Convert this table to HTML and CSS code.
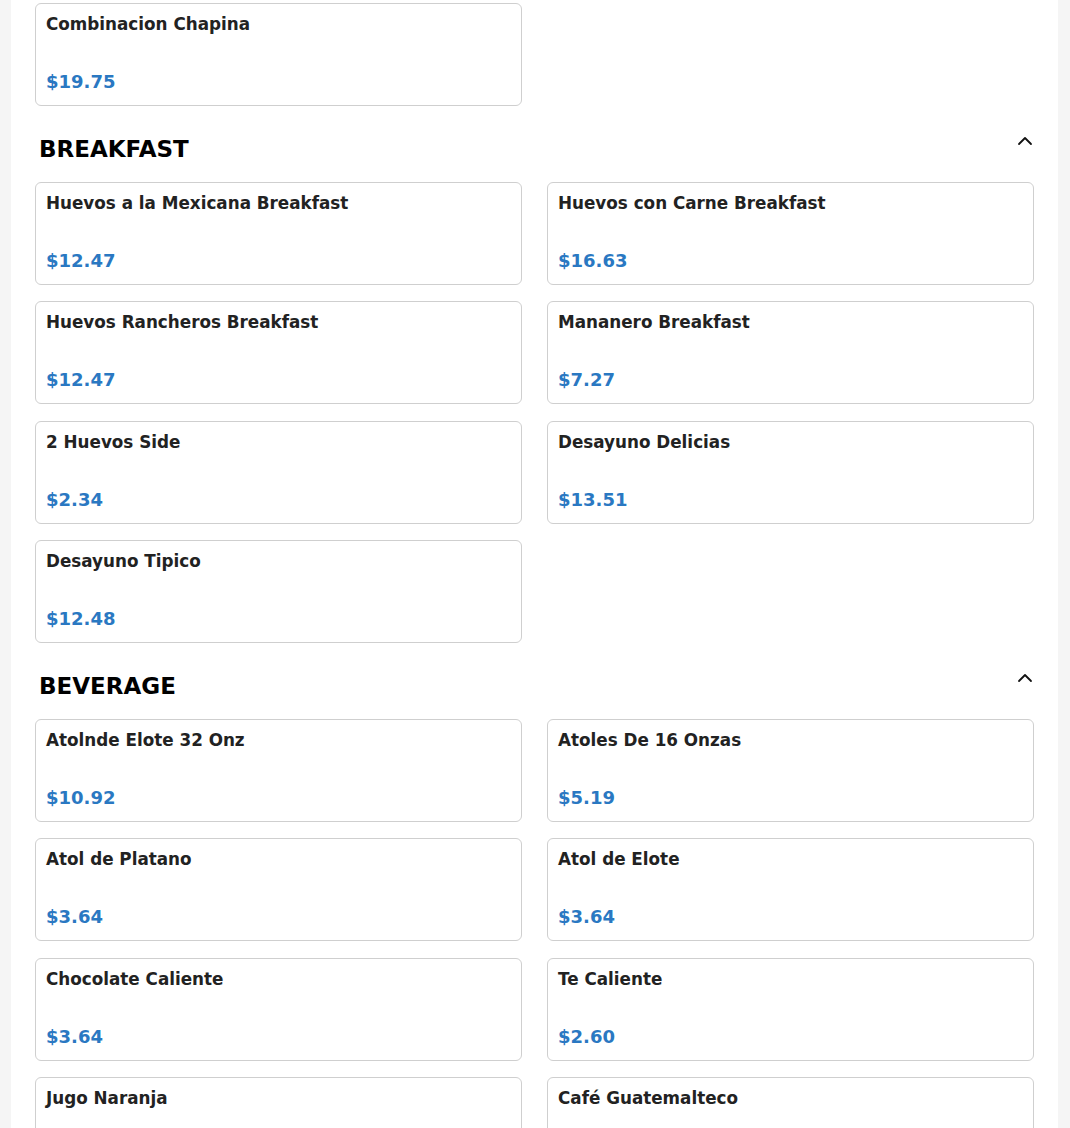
FILE: index.html
```html
<!DOCTYPE html>
<html lang="es">
<head>
<meta charset="utf-8">
<title>Menu</title>
<link rel="stylesheet" href="styles.css">
</head>
<body>
<main class="page">
  <div class="grid">
    <div class="card"><div class="name">Combinacion Chapina</div><div class="price">$19.75</div></div>
  </div>

  <section class="section">
    <div class="section-head">
      <h2 class="section-title">BREAKFAST</h2>
      <svg class="chev" width="16" height="16" viewBox="0 0 16 16"><path d="M2 11 L8 5 L14 11" fill="none" stroke="#111" stroke-width="1.8" stroke-linecap="round" stroke-linejoin="round"/></svg>
    </div>
    <div class="grid">
      <div class="card"><div class="name">Huevos a la Mexicana Breakfast</div><div class="price">$12.47</div></div>
      <div class="card"><div class="name">Huevos con Carne Breakfast</div><div class="price">$16.63</div></div>
      <div class="card"><div class="name">Huevos Rancheros Breakfast</div><div class="price">$12.47</div></div>
      <div class="card"><div class="name">Mananero Breakfast</div><div class="price">$7.27</div></div>
      <div class="card"><div class="name">2 Huevos Side</div><div class="price">$2.34</div></div>
      <div class="card"><div class="name">Desayuno Delicias</div><div class="price">$13.51</div></div>
      <div class="card"><div class="name">Desayuno Tipico</div><div class="price">$12.48</div></div>
    </div>
  </section>

  <section class="section">
    <div class="section-head">
      <h2 class="section-title">BEVERAGE</h2>
      <svg class="chev" width="16" height="16" viewBox="0 0 16 16"><path d="M2 11 L8 5 L14 11" fill="none" stroke="#111" stroke-width="1.8" stroke-linecap="round" stroke-linejoin="round"/></svg>
    </div>
    <div class="grid">
      <div class="card"><div class="name">Atolnde Elote 32 Onz</div><div class="price">$10.92</div></div>
      <div class="card"><div class="name">Atoles De 16 Onzas</div><div class="price">$5.19</div></div>
      <div class="card"><div class="name">Atol de Platano</div><div class="price">$3.64</div></div>
      <div class="card"><div class="name">Atol de Elote</div><div class="price">$3.64</div></div>
      <div class="card"><div class="name">Chocolate Caliente</div><div class="price">$3.64</div></div>
      <div class="card"><div class="name">Te Caliente</div><div class="price">$2.60</div></div>
      <div class="card"><div class="name">Jugo Naranja</div><div class="price">$3.64</div></div>
      <div class="card"><div class="name">Café Guatemalteco</div><div class="price">$2.60</div></div>
    </div>
  </section>
</main>
</body>
</html>
```

FILE: styles.css
```css
html, body {
  margin: 0;
  padding: 0;
  background: #f5f5f5;
  font-family: "DejaVu Sans", "Liberation Sans", sans-serif;
}

.page {
  margin: 0 12px 0 11px;
  background: #ffffff;
  padding: 3px 24px 40px 24px;
  min-height: 1200px;
}

.grid {
  display: grid;
  grid-template-columns: 1fr 1fr;
  column-gap: 25px;
  row-gap: 16.33px;
}

.card {
  box-sizing: border-box;
  height: 103px;
  border: 1px solid #cfcfcf;
  border-radius: 6px;
  padding: 10px 10px 13px 10px;
  display: flex;
  flex-direction: column;
  justify-content: space-between;
}

.name {
  font-size: 16.8px;
  font-weight: bold;
  color: #222222;
  line-height: 20px;
}

.price {
  font-size: 18px;
  font-weight: bold;
  color: #2a78c2;
  line-height: 21px;
}

.section {
  margin-top: 29px;
}

.section-head {
  display: flex;
  justify-content: space-between;
  align-items: flex-start;
  padding: 0 1px 0 4px;
  margin-bottom: 19px;
}

.section-title {
  margin: 0;
  font-size: 23px;
  font-weight: bold;
  color: #000000;
  line-height: 28px;
}

.chev {
  display: block;
  margin-top: -2px;
}
```
